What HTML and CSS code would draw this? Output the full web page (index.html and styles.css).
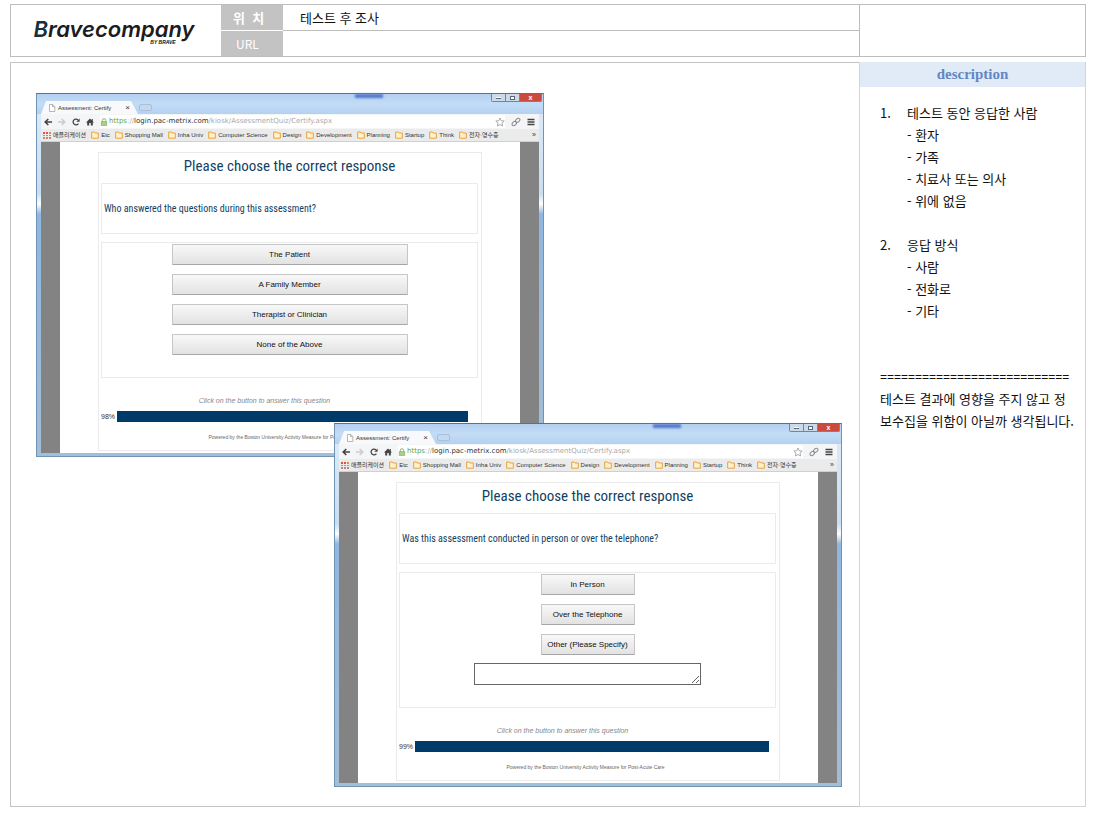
FILE: index.html
```html
<!DOCTYPE html>
<html lang="ko">
<head>
<meta charset="utf-8">
<title>테스트 후 조사</title>
<link rel="stylesheet" href="styles.css">
</head>
<body>
<svg class="defs" aria-hidden="true">
  <symbol id="folder" viewBox="0 0 8 8"><path d="M.7 1h2.6l.8 1h3.2v5.2H.7z" fill="#fff3cd" stroke="#e9a13b" stroke-width="1"/></symbol>
  <symbol id="apps" viewBox="0 0 8 8"><path d="M0 1h2v2H0zM3 1h2v2H3z" fill="#e0533d"/><path d="M6 1h2v2H6zM0 4h2v1H0z" fill="#e58a3d"/><path d="M3 4h2v1H3zM6 4h2v1H6zM0 6h2v2H0zM3 6h2v2H3zM6 6h2v2H6z" fill="#c98574"/></symbol>
  <symbol id="page" viewBox="0 0 8 8"><path d="M1.5.5h3.2L6.8 2.6v4.9H1.5zM4.5.5v2.2h2.3" fill="#fff" stroke="#999" stroke-width=".7"/></symbol>
  <symbol id="back" viewBox="0 0 8 8"><path d="M8 4H1.3M4.3 1 1.2 4l3.1 3" fill="none" stroke="#444" stroke-width="1.6"/></symbol>
  <symbol id="forward" viewBox="0 0 8 8"><path d="M0 4h6.7M3.7 1l3.1 3-3.1 3" fill="none" stroke="#ccc" stroke-width="1.5"/></symbol>
  <symbol id="reload" viewBox="0 0 8 8"><path d="M6.4 5.6A2.9 2.9 0 1 1 6 1.9" fill="none" stroke="#444" stroke-width="1.3"/><path d="M7.6.4v3.4H4.2z" fill="#444"/></symbol>
  <symbol id="home" viewBox="0 0 8 8"><path d="M4 .5 0 4.4h1.2v3.1h2V5h1.6v2.5h2V4.4H8L6.8 3.2V1H5.7v1.2z" fill="#444"/></symbol>
  <symbol id="lock" viewBox="0 0 8 8"><path d="M2.3 4V2.4a1.7 1.7 0 0 1 3.4 0V4" fill="none" stroke="#8ab66b"/><path d="M1.3 3.6h5.4v4H1.3z" fill="#a8cf85" stroke="#78a957" stroke-width=".6"/></symbol>
  <symbol id="star" viewBox="0 0 10 10"><path d="m5 1 1.2 2.7 3 .3L7 6l.6 3L5 7.5 2.4 9 3 6 .8 4l3-.3z" fill="#fff" stroke="#999" stroke-width=".8"/></symbol>
  <symbol id="link" viewBox="0 0 10 10"><g fill="none" stroke="#888" stroke-width="1"><ellipse cx="6.7" cy="3.4" rx="2.5" ry="1.7" transform="rotate(-40 6.7 3.4)"/><ellipse cx="3.3" cy="6.5" rx="2.5" ry="1.7" transform="rotate(-40 3.3 6.5)"/></g></symbol>
  <symbol id="menu" viewBox="0 0 8 8"><path d="M.5 1.5h7M.5 4h7M.5 6.5h7" stroke="#444" stroke-width="1.4"/></symbol>
</svg>

<header class="sheet-head">
  <div class="brand"><span class="brand-name"><span class="brand-initial">B</span>ravecompany</span><span class="brand-sub">BY BRAVE</span></div>
  <div class="label label-top">위 &nbsp;치</div>
  <div class="value value-top">테스트 후 조사</div>
  <div class="label">URL</div>
  <div class="value"></div>
  <div class="spare"></div>
</header>

<main class="sheet">
  <section class="canvas">
    <article class="window window-first">
      <div class="titlebar">
        <div class="tab"><svg class="icon"><use href="#page"/></svg><span>Assessment: Certify</span><button class="tab-close" aria-label="Close tab">×</button></div>
        <div class="newtab"></div>
        <div class="glow"></div>
        <div class="controls"><button aria-label="Minimize"><i class="min"></i></button><button aria-label="Maximize"><i class="max"></i></button><button class="close" aria-label="Close">x</button></div>
      </div>
      <div class="toolbar">
        <svg class="icon"><use href="#back"/></svg><svg class="icon"><use href="#forward"/></svg><svg class="icon"><use href="#reload"/></svg><svg class="icon"><use href="#home"/></svg>
        <div class="address"><svg class="icon"><use href="#lock"/></svg><span class="url"><span class="scheme">https</span>://<span class="host">login.pac-metrix.com</span>/kiosk/AssessmentQuiz/Certify.aspx</span><svg class="icon star"><use href="#star"/></svg></div>
        <svg class="icon large"><use href="#link"/></svg><svg class="icon"><use href="#menu"/></svg>
      </div>
      <nav class="bookmarks">
        <a href="#"><svg class="icon"><use href="#apps"/></svg>애플리케이션</a><a href="#"><svg class="icon"><use href="#folder"/></svg>Etc</a><a href="#"><svg class="icon"><use href="#folder"/></svg>Shopping Mall</a><a href="#"><svg class="icon"><use href="#folder"/></svg>Inha Univ</a><a href="#"><svg class="icon"><use href="#folder"/></svg>Computer Science</a><a href="#"><svg class="icon"><use href="#folder"/></svg>Design</a><a href="#"><svg class="icon"><use href="#folder"/></svg>Development</a><a href="#"><svg class="icon"><use href="#folder"/></svg>Planning</a><a href="#"><svg class="icon"><use href="#folder"/></svg>Startup</a><a href="#"><svg class="icon"><use href="#folder"/></svg>Think</a><a href="#"><svg class="icon"><use href="#folder"/></svg>전자·영수증</a><span class="more">»</span>
      </nav>
      <div class="viewport">
        <div class="quiz">
          <h2>Please choose the correct response</h2>
          <p class="question">Who answered the questions during this assessment?</p>
          <div class="answers">
            <button class="answer">The Patient</button>
            <button class="answer">A Family Member</button>
            <button class="answer">Therapist or Clinician</button>
            <button class="answer">None of the Above</button>
          </div>
          <p class="hint">Click on the button to answer this question</p>
          <div class="progress"><span class="percent">98%</span><div class="track"><div class="bar" style="width:98%"></div></div></div>
          <p class="credit">Powered by the Boston University Activity Measure for Post-Acute Care</p>
        </div>
      </div>
    </article>

    <article class="window window-second">
      <div class="titlebar">
        <div class="tab"><svg class="icon"><use href="#page"/></svg><span>Assessment: Certify</span><button class="tab-close" aria-label="Close tab">×</button></div>
        <div class="newtab"></div>
        <div class="glow"></div>
        <div class="controls"><button aria-label="Minimize"><i class="min"></i></button><button aria-label="Maximize"><i class="max"></i></button><button class="close" aria-label="Close">x</button></div>
      </div>
      <div class="toolbar">
        <svg class="icon"><use href="#back"/></svg><svg class="icon"><use href="#forward"/></svg><svg class="icon"><use href="#reload"/></svg><svg class="icon"><use href="#home"/></svg>
        <div class="address"><svg class="icon"><use href="#lock"/></svg><span class="url"><span class="scheme">https</span>://<span class="host">login.pac-metrix.com</span>/kiosk/AssessmentQuiz/Certify.aspx</span><svg class="icon star"><use href="#star"/></svg></div>
        <svg class="icon large"><use href="#link"/></svg><svg class="icon"><use href="#menu"/></svg>
      </div>
      <nav class="bookmarks">
        <a href="#"><svg class="icon"><use href="#apps"/></svg>애플리케이션</a><a href="#"><svg class="icon"><use href="#folder"/></svg>Etc</a><a href="#"><svg class="icon"><use href="#folder"/></svg>Shopping Mall</a><a href="#"><svg class="icon"><use href="#folder"/></svg>Inha Univ</a><a href="#"><svg class="icon"><use href="#folder"/></svg>Computer Science</a><a href="#"><svg class="icon"><use href="#folder"/></svg>Design</a><a href="#"><svg class="icon"><use href="#folder"/></svg>Development</a><a href="#"><svg class="icon"><use href="#folder"/></svg>Planning</a><a href="#"><svg class="icon"><use href="#folder"/></svg>Startup</a><a href="#"><svg class="icon"><use href="#folder"/></svg>Think</a><a href="#"><svg class="icon"><use href="#folder"/></svg>전자·영수증</a><span class="more">»</span>
      </nav>
      <div class="viewport">
        <div class="quiz">
          <h2>Please choose the correct response</h2>
          <p class="question">Was this assessment conducted in person or over the telephone?</p>
          <div class="answers answers-narrow">
            <button class="answer">In Person</button>
            <button class="answer">Over the Telephone</button>
            <button class="answer">Other (Please Specify)</button>
            <textarea class="other" aria-label="Other (Please Specify)"></textarea>
          </div>
          <p class="hint">Click on the button to answer this question</p>
          <div class="progress"><span class="percent">99%</span><div class="track"><div class="bar" style="width:99%"></div></div></div>
          <p class="credit">Powered by the Boston University Activity Measure for Post-Acute Care</p>
        </div>
      </div>
    </article>
  </section>

  <aside class="notes">
    <h1>description</h1>
    <div class="notes-body">
      <ol>
        <li>테스트 동안 응답한 사람
          <ul><li>- 환자</li><li>- 가족</li><li>- 치료사 또는 의사</li><li>- 위에 없음</li></ul>
        </li>
        <li>응답 방식
          <ul><li>- 사람</li><li>- 전화로</li><li>- 기타</li></ul>
        </li>
      </ol>
      <p class="rule">===========================</p>
      <p class="remark">테스트 결과에 영향을 주지 않고 정보수집을 위함이 아닐까 생각됩니다.</p>
    </div>
  </aside>
</main>
</body>
</html>
```

FILE: styles.css
```css
* { box-sizing: border-box; }
body {
  margin: 0;
  min-height: 100vh;
  padding: 4px 7px 6px 10px;
  display: flex;
  flex-direction: column;
  gap: 5px;
  background: #fff;
  color: #111;
  font: 13px/22px "Noto Sans CJK KR", sans-serif;
}
h1, h2, p, ol, ul { margin: 0; padding: 0; }
ol, ul { list-style: none; }
button { padding: 0; border: 0; background: none; font: inherit; color: inherit; }
.defs { display: none; }
.icon { width: 8px; height: 8px; flex: none; display: block; }
.large { width: 10px; height: 10px; }

.sheet-head {
  display: grid;
  grid-template-columns: 210px 62px 1fr 226px;
  grid-template-rows: 26px 25px;
  border: 1px solid #bdbdbd;
}
.brand { grid-row: span 2; display: grid; justify-items: center; align-content: center; padding-right: 4px; }
.brand-name { font: italic 600 22px/26px "Inter", sans-serif; color: #1c1c1c; }
.brand-initial { color: #17303a; }
.brand-sub { font: italic 700 5px/5px "Liberation Sans", sans-serif; margin: -2px 0 0 98px; }
.label {
  background: #c3c3c3;
  color: #fff;
  display: flex;
  align-items: center;
  padding-left: 15px;
  font-size: 12px;
}
.label-top { border-bottom: 1px solid #fff; padding-left: 12px; font-weight: 700; font-size: 13px; }
.value { padding-left: 17px; line-height: 26px; }
.value-top { border-bottom: 1px solid #bdbdbd; }
.spare { grid-column: 4; grid-row: 1 / span 2; border-left: 1px solid #bdbdbd; }

.sheet { flex: 1; display: grid; grid-template-columns: 1fr 227px; }
.canvas { position: relative; min-height: 745px; border: 1px solid #c4c4c4; border-right: 0; }
.notes { border: 1px solid #d4d4d4; border-top: 0; }
.notes h1 {
  background: #e1ebf7;
  color: #6287c4;
  text-align: center;
  font: 700 15px/25px "Liberation Serif", serif;
}
.notes-body { padding: 15px 4px 0 20px; word-break: break-all; }
.notes ol { counter-reset: item; }
.notes ol > li { counter-increment: item; padding-left: 27px; margin-bottom: 22px; }
.notes ol > li::before { content: counter(item) "."; float: left; margin-left: -27px; }
.rule { margin-top: 44px; font: 12px/22px "Liberation Sans", sans-serif; }
.remark { padding-right: 6px; }

.window {
  position: absolute;
  width: 508px;
  padding: 0 4px 3px 4px;
  border: 1px solid #6f94b4;
  border-top-color: #54738f;
  background: linear-gradient(#bcd7f2 0, #dbe9f7 20px, #c9def2 100px, #fff 110px, #8fb7e0 120px, #a5bdd6 100%);
  font: 6px/12px "Liberation Sans", "Noto Sans CJK KR", sans-serif;
  color: #333;
}
.window-first { left: 25px; top: 30px; }
.window-second { left: 323px; top: 360px; }
.titlebar {
  height: 20px;
  margin: 0 -4px;
  padding-left: 4px;
  display: flex;
  align-items: flex-end;
  background: linear-gradient(#b3d0f1, #c3dcf6 50%, #b4d1f0);
}
.tab {
  width: 97px;
  height: 13px;
  padding: 0 8px 0 7px;
  display: flex;
  align-items: center;
  gap: 2px;
  background: #f8f9fb;
  clip-path: polygon(5px 0, 90px 0, 97px 100%, 0 100%);
}
.tab-close { margin-left: auto; font-size: 8px; }
.newtab { width: 13px; height: 7px; margin: 0 0 3px 1px; border: 1px solid #a9c0da; border-radius: 2px; background: #c4d9ef; }
.glow { width: 28px; height: 4px; margin: 0 0 auto 203px; background: #5478ca; filter: blur(1px); }
.controls { display: flex; margin: 0 1px auto auto; height: 8px; border: 1px solid #71869b; border-top: 0; border-radius: 0 0 2px 2px; }
.controls button { width: 14px; height: 7px; display: grid; place-items: center; background: #cbd9e8; border-right: 1px solid #71869b; }
.controls .close { width: 21px; background: #cc4a3d; color: #fff; border: 0; font: 700 7px/6px "Liberation Sans", sans-serif; }
.min { width: 5px; height: 2px; background: #fff; border-bottom: 1px solid #56677a; }
.max { width: 5px; height: 4px; border: 1px solid #56677a; background: #fff; }
.toolbar {
  height: 15px;
  padding: 0 4px 0 3px;
  display: flex;
  align-items: center;
  gap: 6px;
  background: #f4f5f6;
}
.address { flex: 1; height: 13px; display: flex; align-items: center; gap: 1px; background: #fff; }
.url { font: 7px/13px "DejaVu Sans", sans-serif; color: #aaa; }
.scheme { color: #62a544; }
.host { color: #333; }
.star { width: 10px; height: 10px; margin-left: auto; }
.bookmarks {
  height: 13px;
  padding: 0 3px 0 2px;
  display: flex;
  align-items: center;
  gap: 5px;
  background: #ebebeb;
  border-bottom: 1px solid #d0d0d0;
  white-space: nowrap;
}
.bookmarks a { display: flex; align-items: center; gap: 2px; color: #333; text-decoration: none; }
.more { margin-left: auto; font-size: 7px; }

.viewport { padding: 10px 38px 2px 38px; background: #fff; border: solid #838383; border-width: 0 19px; }
.quiz {
  height: 299px;
  padding: 0 3px 0 2px;
  border: 1px solid #ebebeb;
  display: flex;
  flex-direction: column;
  color: #123f63;
}
.quiz h2 { font: 400 15px/26px "Roboto Condensed", "Open Sans Condensed Light", "Lato", sans-serif; text-align: center; margin-bottom: 4px; }
.question { height: 51px; padding: 0 2px; font: 10px/49px "Roboto Condensed", "Open Sans Condensed Light", "Lato", sans-serif; border: 1px solid #ebebeb; }
.answers {
  height: 136px;
  margin-top: 8px;
  padding-top: 1px;
  display: flex;
  flex-direction: column;
  align-items: center;
  gap: 9px;
  border: 1px solid #ebebeb;
}
.answer {
  width: 236px;
  height: 21px;
  border: 1px solid #c6c6c6;
  border-bottom-color: #a6a6a6;
  border-radius: 1px;
  background: linear-gradient(#f8f8f8, #e2e2e2);
  color: #111;
  font: 8px/18px "Liberation Sans", sans-serif;
}
.answers-narrow .answer { width: 94px; }
.other { width: 227px; height: 22px; margin-top: -1px; border: 1px solid #666; background: #fff; font: 8px/10px "Liberation Sans", sans-serif; }
.hint { margin-top: 17px; padding-right: 50px; text-align: center; font-style: italic; font-size: 7px; color: #888; }
.progress { margin-top: 4px; padding-right: 3px; display: flex; align-items: center; }
.percent { width: 16px; font-size: 7px; line-height: 11px; color: #333; }
.track { flex: 1; }
.bar { height: 11px; background: #003a68; }
.credit { margin-top: 9px; padding-right: 4px; text-align: center; font-size: 5px; color: #666; }
```
